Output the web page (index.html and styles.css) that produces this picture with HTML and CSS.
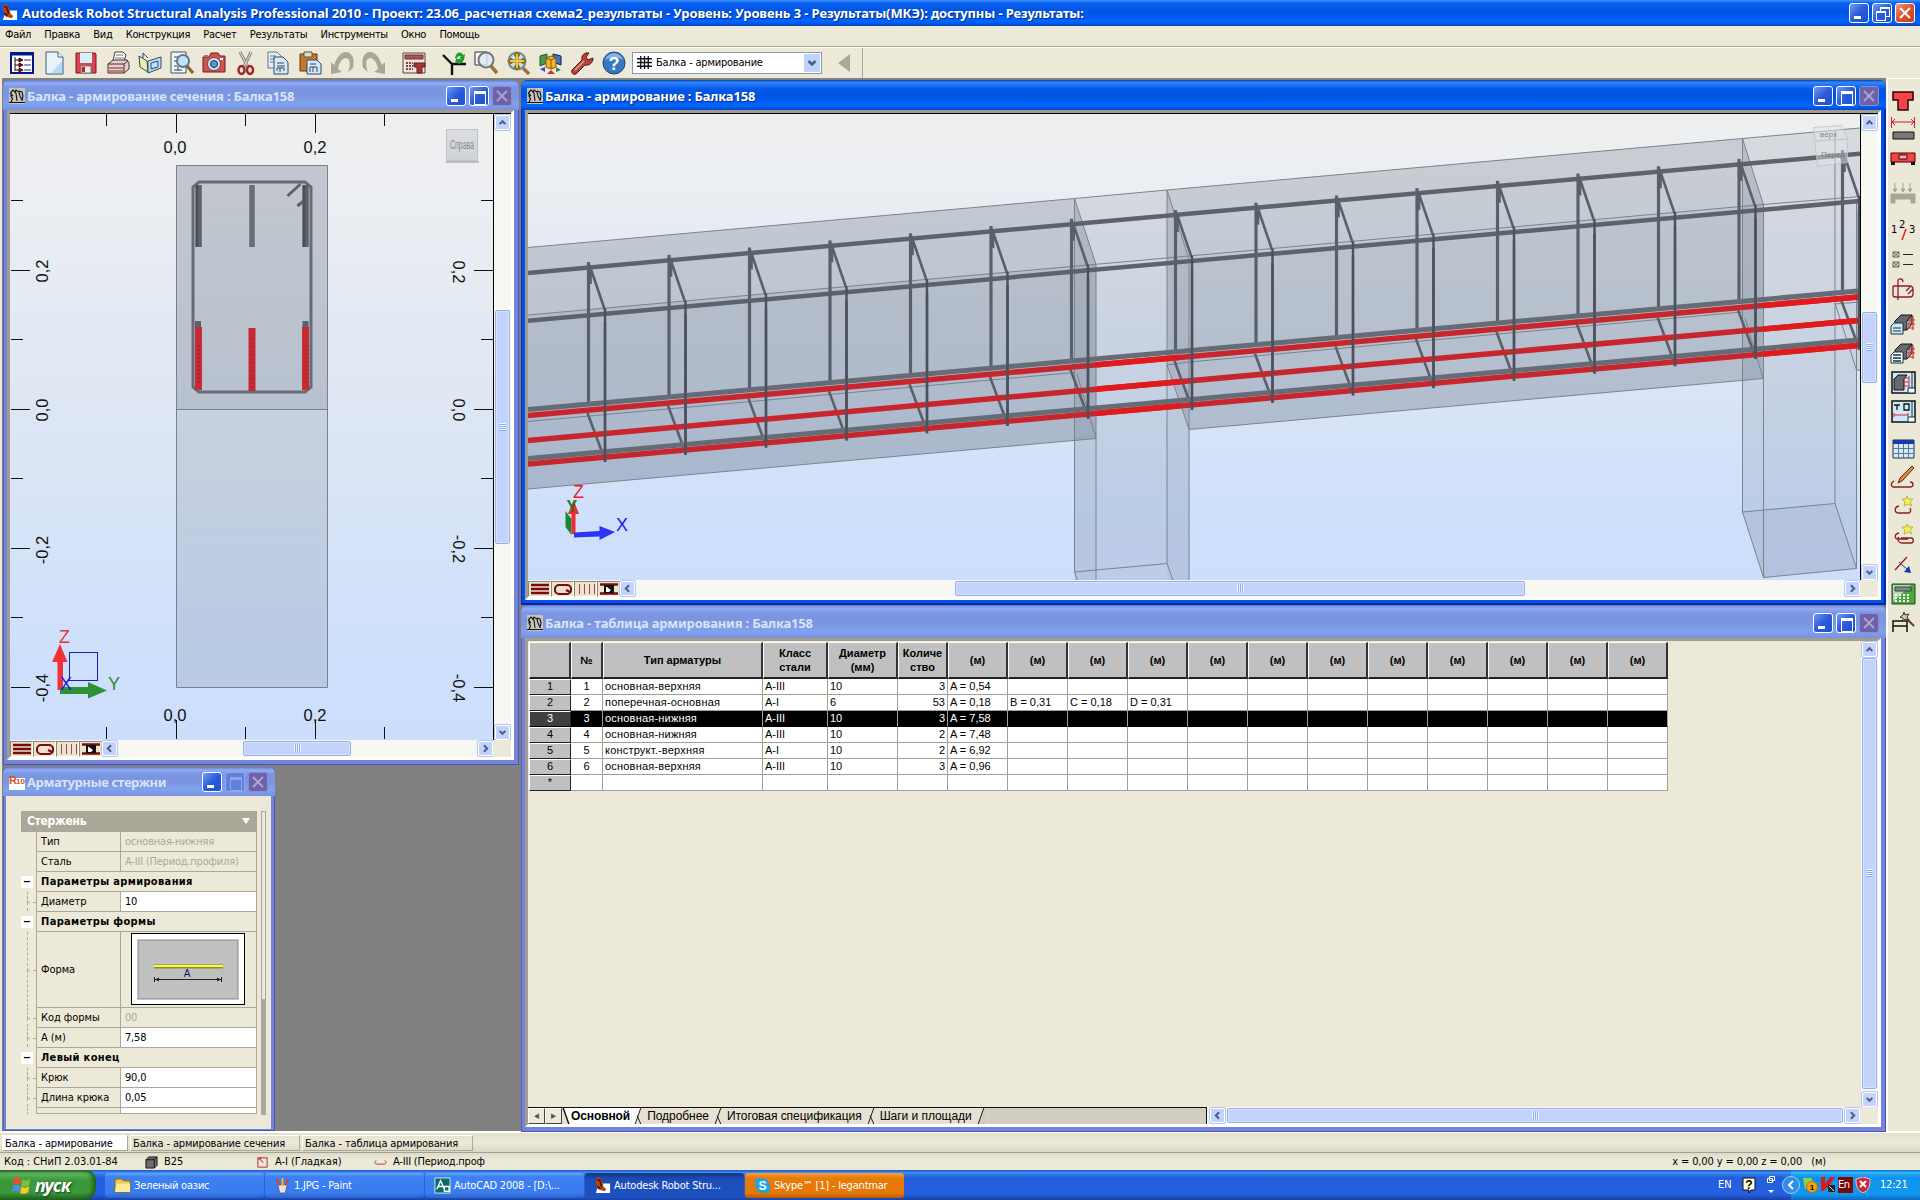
FILE: index.html
```
<!DOCTYPE html>
<html lang="ru">
<head>
<meta charset="utf-8">
<title>Autodesk Robot Structural Analysis Professional 2010</title>
<link rel="stylesheet" href="styles.css">
</head>

<body>
<!-- shared symbols -->
<svg class="defs">
	<defs>
		<linearGradient id="sky" x1="0" y1="0" x2="0" y2="1">
			<stop offset="0" stop-color="#efefef"/>
			<stop offset=".15" stop-color="#ebeef2"/>
			<stop offset=".5" stop-color="#dde6f4"/>
			<stop offset=".85" stop-color="#cfe0fb"/>
			<stop offset="1" stop-color="#cddefd"/>
		</linearGradient>
		<linearGradient id="cube" x1="0" y1="0" x2="0" y2="1"><stop offset="0" stop-color="#dcdee2"/><stop offset="1" stop-color="#cfd2d8"/></linearGradient>
		<symbol id="up" viewBox="0 0 16 16"><path d="M4.500 10L8 6.500l3.500 3.500" fill="none" stroke="#4d6185" stroke-width="2.600"/></symbol>
		<symbol id="down" viewBox="0 0 16 16"><path d="M4.500 6L8 9.500 11.500 6" fill="none" stroke="#4d6185" stroke-width="2.600"/></symbol>
		<symbol id="left" viewBox="0 0 16 16"><path d="M10 4L6 8l4 4" fill="none" stroke="#4d6185" stroke-width="2.600"/></symbol>
		<symbol id="right" viewBox="0 0 16 16"><path d="M6 4l4 4-4 4" fill="none" stroke="#4d6185" stroke-width="2.600"/></symbol>
		<symbol id="wico" viewBox="0 0 16 16"><path d="M0 0h16v16H0z" fill="#c6c4bc"/><path d="M0 14.500h16M2 14l1.500-3L2 8V4l2-2 3 3 1 8M6 5l1-3 3 2 1 4 2 4M10 3l3 1 1 4-1 5M1 5l3 3" fill="none" stroke="#111" stroke-width="1.100"/></symbol>
		<symbol id="robot" viewBox="0 0 18 18"><path d="M5 7h12v10H2z" fill="#fff"/><path d="M2 1l4-1 3 5 1 5 3 3-2 2-7-2-2-6z" fill="#b4440f"/><path d="M3 3l3 0 2 7M3 10l4 2" stroke="#3c1404" stroke-width="1.500" fill="none"/></symbol>
		<symbol id="b1" viewBox="0 0 20 14"><path d="M1 3h18M1 7h18M1 11h18" stroke="#7c0a0a" stroke-width="2.400"/></symbol>
		<symbol id="b2" viewBox="0 0 20 14"><rect x="2" y="3" width="16" height="9" rx="4" fill="none" stroke="#7c0a0a" stroke-width="2"/><path d="M13 8l4 2" stroke="#7c0a0a" stroke-width="2"/></symbol>
		<symbol id="b3" viewBox="0 0 20 14"><path d="M3.500 2v10M8.500 2v10M13.500 2v10M18.500 2v10" stroke="#a34848"/></symbol>
		<symbol id="b4" viewBox="0 0 20 14"><path d="M1 2.500h18M1 11.500h18" stroke="#7c0a0a" stroke-width="2.400"/><path d="M5 3h10v8H5z" fill="#111"/><path d="M7 10V5h1l4 3-2 2z" fill="#fff"/></symbol>
		<!-- one stirrup of the cage, origin at its upper rear corner -->
		<g id="st" fill="none" stroke="#5a5f6a" stroke-width="2.600">
			<path d="M0 0v141" stroke-width="3.200"/>
			<path d="M1 3l15 44M-1 151l16 43M2 8v14"/>
			<path d="M16.500 46v154" stroke="#4b505b" stroke-width="2.400"/>
		</g>
	</defs>
</svg>

<div id="app">
	<div id="title">
		<svg width="17" height="17"><use href="#robot"/></svg>
		<b>Autodesk Robot Structural Analysis Professional 2010 - Проект: 23.06_расчетная схема2_результаты - Уровень: Уровень 3 - Результаты(МКЭ): доступны - Результаты:</b>
		<span class="btns"><i class="min"></i><i class="res"></i><i class="cls"></i></span>
	</div>
	<div id="menu">
		<span>Файл</span><span>Правка</span><span>Вид</span><span>Конструкция</span><span>Расчет</span><span>Результаты</span><span>Инструменты</span><span>Окно</span><span>Помощь</span>
	</div>

	<div id="tools">
		<svg viewBox="0 0 24 24"><path d="M1 2h22v20H1z" fill="#fff" stroke="#001a80" stroke-width="2"/><path d="M1 3h22" stroke="#001a80" stroke-width="3"/><path d="M5 6v14M5 9h5M5 14h5M5 19h5" stroke="#111"/><path d="M9 7l4 2-4 2zM9 12l4 2-4 2zM9 17l4 2-4 2z" fill="#a00" stroke="#400"/><path d="M14 9h7M14 14h7M14 19h7" stroke="#223a90"/></svg>
		<svg viewBox="0 0 24 24"><path d="M4 1h12l5 5v17H4z" fill="#e8f4fc" stroke="#3f5c78"/><path d="M16 1v5h5" fill="#fff" stroke="#3f5c78"/><path d="M9 22l11-12v12z" fill="#b4dbf3"/></svg>
		<svg viewBox="0 0 24 24"><path d="M2 2h19l1 1v19H2z" fill="#d84450" stroke="#7c1822"/><path d="M6 2h12v10H6z" fill="#d6eef5"/><path d="M7 15h10v7H7z" fill="#eee" stroke="#777"/><path d="M8 16h3v5H8z" fill="#b22"/></svg>
		<svg viewBox="0 0 24 24"><path d="M7 10l2-9h8l3 3-2 6z" fill="#fff" stroke="#444"/><path d="M10 4h7M9 7h9" stroke="#777"/><path d="M2 13l5-4h14l2 3v6l-5 4H2z" fill="#e2d2cf" stroke="#4e2a2a"/><path d="M2 13h16l4-3M18 13v9" stroke="#4e2a2a" fill="none"/><path d="M3 17h15M3 20h15" stroke="#b06060" stroke-width="1.500"/></svg>
		<svg viewBox="0 0 24 24"><path d="M1 5l8 5 1 11-8-5z" fill="#e8efb0" stroke="#2e4a48"/><path d="M10 10l13-4v11l-13 5z" fill="#bfe0f4" stroke="#2e4a68"/><path d="M13 12l7-2v6l-7 2zM5 7V2l5 5" fill="none" stroke="#284a6a"/></svg>
		<svg viewBox="0 0 24 24"><path d="M1 1h15v21H1z" fill="#eef6fb" stroke="#456"/><path d="M4 6h5M4 10h4M4 15h3M8 15v5M4 19h8" stroke="#345"/><circle cx="13" cy="10" r="6" fill="#bfe4f5" stroke="#678" stroke-width="2"/><path d="M17 15l6 7" stroke="#8a6230" stroke-width="3"/></svg>
		<svg viewBox="0 0 24 24"><path d="M1 6h6l2-4h7l2 3h5v16H1z" fill="#d94c50" stroke="#6d2024"/><path d="M1 6h5V4H2z" fill="#888"/><circle cx="12" cy="13" r="6.500" fill="#dcdde0" stroke="#555"/><circle cx="12" cy="13" r="3.500" fill="#4b9bd8" stroke="#235"/><path d="M18 8h3" stroke="#fff" stroke-width="2"/></svg>
		<svg viewBox="0 0 24 24"><path d="M6 1l8 15M17 1l-7 15" stroke="#888" stroke-width="3"/><path d="M6 1l8 15M17 1l-7 15" stroke="#ddd" stroke-width="1"/><ellipse cx="7.500" cy="19" rx="3" ry="4" fill="none" stroke="#a02828" stroke-width="2.500"/><ellipse cx="16" cy="19" rx="3" ry="4" fill="none" stroke="#a02828" stroke-width="2.500"/></svg>
		<svg viewBox="0 0 24 24"><path d="M2 1h9l4 4v12H2z" fill="#e3eef6" stroke="#678"/><path d="M4 5h6M4 8h6M4 11h4" stroke="#678"/><path d="M8 6h9l5 5v12H8z" fill="#d5eaf8" stroke="#2e4a68"/><path d="M11 12h7M11 15h8M11 20v-3h7v3M14 17v4" fill="none" stroke="#345"/></svg>
		<svg viewBox="0 0 24 24"><path d="M2 3h17v17H2z" fill="#c47a2c" stroke="#5d3610"/><path d="M6 1h8v5H6z" fill="#e5dfae" stroke="#555"/><path d="M9 9h10l4 4v10H9z" fill="#d5eaf8" stroke="#2e4a68"/><path d="M12 13h6M12 21v-5h7v5M15 16v5" fill="none" stroke="#345"/></svg>
		<svg viewBox="0 0 24 24"><path d="M1 23V11l3 3C7 6 11 1 16 1c6 0 9 7 7 16l-5 4c3-8 2-14-2-14-4 0-7 5-8 11l4 3z" fill="#a9a79a"/></svg>
		<svg viewBox="0 0 24 24"><path d="M23 23V11l-3 3C17 6 13 1 8 1 2 1-1 8 1 17l5 4C3 13 4 7 8 7c4 0 7 5 8 11l-4 3z" fill="#a9a79a"/></svg>
		<svg class="gap" viewBox="0 0 24 24"><path d="M1 2h22v20H1z" fill="#ece4e0" stroke="#5c4444"/><path d="M3 4h18v4H3z" fill="#ba4e4e" stroke="#633"/><path d="M4 12h7M4 15h7M4 18h7" stroke="#844" stroke-dasharray="2 1" stroke-width="2"/><path d="M12 12h11v4h-3v6h-5v-6h-3z" fill="#a33" stroke="#522"/></svg>
		<svg class="gap" viewBox="0 0 24 24"><path d="M1 4l9 9h14M10 13v11" stroke="#111" stroke-width="2.400" fill="none"/><path d="M13 7c1-6 6-7 8-3l2-1-1 6-5-2 2-1c-1-2-4-1-4 2zM22 8c-1 5-6 6-8 3l-1 1 1-4z" fill="#1f9e2a"/></svg>
		<svg viewBox="0 0 24 24"><path d="M1 1h12v13H1z" fill="#f5f5ff" stroke="#333"/><circle cx="12" cy="9" r="7.500" fill="#d8ecf5" fill-opacity=".8" stroke="#777" stroke-width="2"/><path d="M17 15l6 7" stroke="#9c7138" stroke-width="3.500"/></svg>
		<svg viewBox="0 0 24 24"><circle cx="11" cy="10" r="8.500" fill="#c6e1f0" stroke="#788" stroke-width="2"/><path d="M11 3v14M4 10h14M8.500 5L11 3l2.500 2M8.500 15l2.500 2 2.500-2M6 7.500L4 10l2 2.500M16 7.500l2 2.500-2 2.500" stroke="#8a6410" stroke-width="3" fill="none"/><path d="M11 3v14M4 10h14" stroke="#f4c838" stroke-width="2"/><path d="M17 17l6 6" stroke="#9c7138" stroke-width="3.500"/></svg>
		<svg viewBox="0 0 24 24"><path d="M2 5l7-2v9l-7 3z" fill="#4a9a4c" stroke="#254"/><path d="M15 3l8 2v9l-8-3z" fill="#3c74c8" stroke="#124"/><path d="M8 7l5-2 5 2v9l-5 2-5-2z" fill="#f2b530" stroke="#850"/><path d="M8 7l5 2 5-2M13 9v9" stroke="#850" fill="none"/><path d="M2 18l5-2v5z" fill="#2d55c0"/><path d="M9 23l4-4 4 4z" fill="#c33"/><path d="M23 19l-5-3v5z" fill="#2d8a3a"/></svg>
		<svg viewBox="0 0 24 24"><path d="M2 19L12 9c-1-4 2-8 7-7l-3 4 2 3 5-2c0 5-4 8-8 7L6 23c-3 1-5-1-4-4z" fill="#b3433d" stroke="#521815"/><path d="M5 19l9-9" stroke="#e8a09a" stroke-width="1.500"/></svg>
		<svg viewBox="0 0 24 24"><circle cx="12" cy="12" r="11" fill="#3578c4" stroke="#1d4373"/><path d="M3 9c2-9 16-9 18 0-5-3-12-3-18 0z" fill="#84b4e4"/><text x="12" y="19" text-anchor="middle" class="q">?</text></svg>
		<div id="combo"><svg viewBox="0 0 16 16"><path d="M0 4h16M0 8h16M0 12h16M4 1v14M8 1v14M12 1v14" stroke="#111" stroke-width="1.400"/></svg><span>Балка - армирование</span><i><svg viewBox="0 0 16 16"><use href="#down"/></svg></i></div>
		<div id="tri"></div>
		<div id="tbend"></div>
	</div>

	<div id="main">
	<div id="mdi">

		<div class="win" id="w1">
			<div class="cap"><svg width="16" height="16"><use href="#wico"/></svg><b>Балка - армирование сечения : Балка158</b><span class="btns"><i class="min"></i><i class="max"></i><i class="cls off"></i></span></div>
			<div class="frame view">
				<svg class="scene" viewBox="10 114 483 626">
					<rect x="10" y="114" width="483" height="626" fill="url(#sky)"/>
					<rect x="176.500" y="165.500" width="151" height="244" fill="#505c70" fill-opacity=".27"/>
					<rect x="176.500" y="409.500" width="151" height="278" fill="#505c70" fill-opacity=".16"/>
					<path d="M176.500 165.500h151v522h-151zM176.500 409.500h151" fill="none" stroke="#79828b"/>
					<g stroke="#111">
						<path d="M106.500 114v12M176.500 114v19M245.500 114v12M315.500 114v19M384.500 114v12M106.500 727v12M176.500 720v19M245.500 727v12M315.500 720v19M384.500 727v12"/>
						<path d="M11 200.500h12M11 270.500h19M11 339.500h12M11 409.500h19M11 478.500h12M11 548.500h19M11 617.500h12M11 687.500h19"/>
						<path d="M481 200.500h12M474 270.500h19M481 339.500h12M474 409.500h19M481 478.500h12M474 548.500h19M481 617.500h12M474 687.500h19"/>
					</g>
					<g class="num">
						<text x="175" y="153">0,0</text><text x="315" y="153">0,2</text>
						<text x="175" y="721">0,0</text><text x="315" y="721">0,2</text>
						<text transform="translate(48 271) rotate(-90)">0,2</text>
						<text transform="translate(48 410) rotate(-90)">0,0</text>
						<text transform="translate(48 550) rotate(-90)">-0,2</text>
						<text transform="translate(48 688) rotate(-90)">-0,4</text>
						<text transform="translate(453 272) rotate(90)">0,2</text>
						<text transform="translate(453 410) rotate(90)">0,0</text>
						<text transform="translate(453 549) rotate(90)">-0,2</text>
						<text transform="translate(453 688) rotate(90)">-0,4</text>
					</g>
					<path d="M199 182h106l6 5v200l-6 5H199l-6-5V187z" fill="none" stroke="#666b76" stroke-width="3"/>
					<path d="M198.500 185v62M305.500 185v62" stroke="#5c616b" stroke-width="6.500"/>
					<path d="M252 185v62" stroke="#676c76" stroke-width="5.500"/>
					<path d="M197 185v62M304 185v62" stroke="#484d58" stroke-width="2"/>
					<path d="M287.500 196l13-12M297.500 206l6-5" stroke="#5c616b" stroke-width="3"/>
					<path d="M198 321v7M305.500 321v7" stroke="#5c616b" stroke-width="6"/>
					<path d="M198.500 327v63M305.500 327v63M252 328v63" stroke="#c62b33" stroke-width="7"/>
					<path d="M252 338v50M199 345v40M306 345v40" stroke="#9e2028" stroke-dasharray="2 2"/>
					<path d="M446 162h33" stroke="#bbb" stroke-width="2"/>
					<rect x="446.500" y="129.500" width="31" height="31" fill="url(#cube)" stroke="#c0c3c9"/>
					<text x="450" y="149" class="cube" textLength="24" lengthAdjust="spacingAndGlyphs">Справа</text>
					<rect x="69.500" y="652.500" width="28" height="28" fill="none" stroke="#1c1cb8"/>
					<path d="M57.500 690v-28H52l8-18 7.500 18H63v28z" fill="#ee3338"/>
					<path d="M60 687h28v-5l19 8.500-19 8V694H60z" fill="#2f9136"/>
					<text x="59" y="643" class="ax" fill="#e8343a">Z</text><text x="108" y="690" class="ax" fill="#2a8a32">Y</text><text x="60" y="690" class="ax" fill="#1a1ae0">X</text>
				</svg>
				<div class="vbar"><i class="ar"><svg><use href="#up"/></svg></i><i class="thumb" style="height:234px;margin-top:180px"><u></u></i><i class="ar end"><svg><use href="#down"/></svg></i></div>
				<div class="hbar"><i class="tb"><svg><use href="#b1"/></svg></i><i class="tb"><svg><use href="#b2"/></svg></i><i class="tb"><svg><use href="#b3"/></svg></i><i class="tb"><svg><use href="#b4"/></svg></i><i class="ar"><svg><use href="#left"/></svg></i><i class="thumb" style="width:108px;margin-left:125px"><u></u></i><i class="ar end"><svg><use href="#right"/></svg></i></div>
				<div class="corner"></div>
			</div>
		</div>

		<div class="win act" id="w2">
			<div class="cap"><svg width="16" height="16"><use href="#wico"/></svg><b>Балка - армирование : Балка158</b><span class="btns"><i class="min"></i><i class="max"></i><i class="cls off"></i></span></div>
			<div class="frame view">
				<svg class="scene" viewBox="528 114 1332 466">
					<rect x="528" y="114" width="1332" height="466" fill="url(#sky)"/>
					<!-- columns -->
					<path d="M1074.500 198.500L1167 190l22 69v321H1074.500z" fill="#505c70" fill-opacity=".14"/>
					<path d="M1074.500 436h21.500v144h-21.500zM1167 365l22 64v151h-22z" fill="#505c70" fill-opacity=".05"/>
					<path d="M1742.500 138.500l117.500-10.500V371h-3.500V568.500l-93 9-21-66z" fill="#505c70" fill-opacity=".14"/>
					<path d="M1742.500 511.500l92.500-8 21.500 65-93 9z" fill="#505c70" fill-opacity=".07"/>
					<!-- beam spans -->
					<path d="M528 247.500l546.500-49 21.500 66v174l-568 50.500z" fill="#4a5868" fill-opacity=".24"/>
					<path d="M528 315l568-51v174l-568 50.500z" fill="#4a5868" fill-opacity=".07"/>
					<path d="M1167 190l575.500-51.500 21 66.500v173.500l-574.500 51-22-65z" fill="#4a5868" fill-opacity=".22"/>
					<path d="M1189 259l574.500-54v173.500l-574.500 51z" fill="#4a5868" fill-opacity=".06"/>
					<g fill="none" stroke="#7b838b">
						<path d="M528 247.500l546.500-49L1167 190l575.500-51.500L1860 128M528 315l661-59 574-51.500 97-8"/>
						<path d="M528 421.500l546.500-49M1189 362l553-50M528 489l568-50.500M1189 429.500l574.500-51"/>
						<path d="M1074.500 198.500l21.500 66v316M1074.500 198.500v373.500l92.500-8.500M1167 190l22 69v321M1167 190v373.500l6 17M1074.500 572l3 8M1077 374l19 64M1167 365l22 64M1167 365l22-3"/>
						<path d="M1742.500 138.500l21 66.500v372.500l93-9M1742.500 138.500v373.500l92.500-8.500M1835 131v372.500l21.500 65V200M1742.500 512l21 65.500M1745 318l18 60M1835 303l21.500 67h4M1835 304l25-2"/>
					</g>
					<!-- longitudinal bars -->
					<path d="M528 273L1860 153.700M528 320.700L1860 201" stroke="#5d626c" stroke-width="4.500"/>
					<g id="cage"></g>
					<path d="M528 409.500L1858 291M528 458.500L1858 340" stroke="#666c76" stroke-width="5"/>
					<path d="M528 415.500L1858 297M528 440.500L1858 320.500M528 464L1858 345.500" stroke="#c8262d" stroke-width="5.500"/>
					<path d="M1097 364.700L1180 357.300M1097 389L1180 381.700M1097 413.200L1180 405.800M1764 305.400L1858 297M1764 329L1858 320.500M1764 353.900L1858 345.500" stroke="#e2191d" stroke-width="5.500"/>
					<g id="front" stroke="#4b505b" stroke-width="2.400"></g>
					<g opacity=".8"><path d="M1813.500 127.500l28-2 6 13v24l-30 4z" fill="#e3e4e6" fill-opacity=".6" stroke="#c0c3c8"/><path d="M1814 141l33-2" stroke="#bbb"/><text x="1820" y="137" class="cube s">верх</text><text x="1821" y="157" class="cube s">Перед</text></g>
					<path d="M565.500 511l6 8v16l-6-8z" fill="#1e8433"/>
					<path d="M571.500 534v-20H568l5.500-14 5.500 14h-3.500v20z" fill="#f02b32"/>
					<path d="M574 532.500l25.500-1.500v-5l15.500 6-15.500 8v-3.500l-25.500 1z" fill="#2b33f5"/>
					<text x="573" y="498" class="ax" fill="#f01c24">Z</text><text x="566.500" y="512" class="ax y" fill="#237a24">Y</text><text x="616" y="531" class="ax" fill="#1a1ae8">X</text>
				</svg>
				<div class="vbar"><i class="ar"><svg><use href="#up"/></svg></i><i class="thumb" style="height:71px;margin-top:182px"><u></u></i><i class="ar end"><svg><use href="#down"/></svg></i></div>
				<div class="hbar"><i class="tb"><svg><use href="#b1"/></svg></i><i class="tb"><svg><use href="#b2"/></svg></i><i class="tb"><svg><use href="#b3"/></svg></i><i class="tb"><svg><use href="#b4"/></svg></i><i class="ar"><svg><use href="#left"/></svg></i><i class="thumb" style="width:570px;margin-left:319px"><u></u></i><i class="ar end"><svg><use href="#right"/></svg></i></div>
				<div class="corner"></div>
			</div>
		</div>

		<div class="win" id="w3">
			<div class="cap"><svg width="16" height="16"><use href="#wico"/></svg><b>Балка - таблица армирования : Балка158</b><span class="btns"><i class="min"></i><i class="max"></i><i class="cls off"></i></span></div>
			<div class="frame view">
				<div class="sheet"><table id="tab"></table></div>
				<div class="vbar"><i class="ar"><svg><use href="#up"/></svg></i><i class="thumb" style="height:431px;margin-top:1px"><u></u></i><i class="ar end"><svg><use href="#down"/></svg></i></div>
				<div class="hbar">
					<div class="pages">
						<i class="pg">◂</i><i class="pg">▸</i>
						<div class="tabs">
							<svg class="edge" viewBox="0 0 8 17"><path d="M0 0h8v17z" fill="#fff"/><path d="M1 0l6 17" stroke="#111" stroke-width="1.500"/></svg><b>Основной</b>
							<svg class="edge w" viewBox="0 0 14 17"><path d="M0 0h10L5 17H0z" fill="#fff"/><path d="M10 0L4 17M6 8l4 9" stroke="#111" fill="none"/></svg><span>Подробнее</span>
							<svg class="edge w" viewBox="0 0 14 17"><path d="M10 0L4 17M6 8l4 9" stroke="#111" fill="none"/></svg><span>Итоговая спецификация</span>
							<svg class="edge w" viewBox="0 0 14 17"><path d="M10 0L4 17M6 8l4 9" stroke="#111" fill="none"/></svg><span>Шаги и площади</span>
							<svg class="edge w" viewBox="0 0 14 17"><path d="M10 0h4v17H4z" fill="#d1cdc3"/><path d="M10 0L4 17" stroke="#111" fill="none"/></svg>
						</div>
					</div>
					<i class="ar"><svg><use href="#left"/></svg></i><i class="thumb" style="width:616px;margin-left:1px"><u></u></i><i class="ar end"><svg><use href="#right"/></svg></i>
				</div>
				<div class="corner"></div>
			</div>
		</div>

		<div class="win" id="w4">
			<div class="cap"><svg width="16" height="16" viewBox="0 0 16 16"><path d="M0 4h16v12H0z" fill="#fff"/><text x="0" y="10" class="r10">R</text><text x="7" y="10" class="r10 n">10</text></svg><b>Арматурные стержни</b><span class="btns"><i class="min"></i><i class="max off"></i><i class="cls off"></i></span></div>
			<div class="pbody">
				<div id="props">
					<div class="phead">Стержень<i></i></div>
					<div class="prow"><label>Тип</label><span class="dis">основная-нижняя</span></div>
					<div class="prow"><label>Сталь</label><span class="dis">A-III (Период.профиля)</span></div>
					<div class="prow grp"><b>Параметры армирования</b></div>
					<div class="prow t"><label>Диаметр</label><span>10</span></div>
					<div class="prow grp"><b>Параметры формы</b></div>
					<div class="prow t tall"><label>Форма</label><span class="dis">
						<svg width="114" height="72" viewBox="0 0 114 72"><rect x=".5" y=".5" width="113" height="71" fill="#fff" stroke="#000"/><rect x="7" y="7" width="100" height="59" fill="#c0c0c0" stroke="#888"/><path d="M23 33.500h69" stroke="#8c8c20" stroke-width="4"/><path d="M23 33h69" stroke="#f8f840" stroke-width="2"/><path d="M23.500 46.500h67M23.500 44v5M90.500 44v5" stroke="#222"/><path d="M24 46.500l4-2v4zM90 46.500l-4-2v4z" fill="#222"/><text x="56" y="44" class="dim">A</text></svg></span></div>
					<div class="prow t"><label>Код формы</label><span class="dis">00</span></div>
					<div class="prow t"><label>А (м)</label><span>7,58</span></div>
					<div class="prow grp"><b>Левый конец</b></div>
					<div class="prow t"><label>Крюк</label><span>90,0</span></div>
					<div class="prow t"><label>Длина крюка</label><span>0,05</span></div>
					<div class="prow t last"><label></label><span></span></div>
				</div>
				<div id="pscroll"><i></i></div>
			</div>
		</div>
	</div>

	<div id="side">
		<svg viewBox="0 0 26 26"><path d="M3 5h20v8h-5v10H8V13H3z" fill="#f4444c" stroke="#300" stroke-width="1.500"/></svg>
		<svg viewBox="0 0 26 26"><path d="M1.500 1v11M24.500 1v11M1 6h24M5 3L2 6l3 3M21 3l3 3-3 3" stroke="#d81c24" fill="none"/><path d="M3 16h21v7H3z" fill="#777b7a" stroke="#111"/></svg>
		<svg viewBox="0 0 26 26"><path d="M1 8h24v9H1z" fill="#f4444c" stroke="#400"/><path d="M1 17h4v3H1zM21 17h4v3h-4z" fill="#111"/><path d="M9 10h8v4H9z" fill="#f9b5b5" stroke="#400"/></svg>
		<svg class="gap" viewBox="0 0 26 26"><path d="M1 13h24v9h-4v-4H5v4H1zM5 2v8M13 2v8M20 2v8M3 8l2 3 2-3zM11 8l2 3 2-3zM18 8l2 3 2-3z" fill="#a9a699" stroke="#a9a699"/></svg>
		<svg class="gap" viewBox="0 0 26 26"><text x="1" y="15" class="tx">1</text><text x="9" y="10" class="tx">2</text><text x="19" y="15" class="tx">3</text><path d="M12 22l4-11" stroke="#d22" stroke-width="1.500"/></svg>
		<svg viewBox="0 0 26 26"><path d="M3 5h6v5H3zM3 15h6v5H3zM3 5l6 5M9 5l-6 5M3 15l6 5M9 15l-6 5" stroke="#444" fill="none" stroke-width=".8"/><path d="M13 7.500h10M13 17.500h10" stroke="#222"/></svg>
		<svg viewBox="0 0 26 26"><path d="M8 24V5c0-3 5-3 5 1M3 10h17c3 0 3 2 3 4v4c0 2-1 3-3 3H6c-3 0-3-1-3-3v-8M16 15l4-4M18 18l5-5" stroke="#8e1c24" fill="none" stroke-width="1.300"/></svg>
		<svg class="gap" viewBox="0 0 26 26"><path d="M5 9l6-6h11l-5 6v9H5z" fill="#666a6c" stroke="#111"/><path d="M17 9l5-6v9l-5 6" fill="#999" stroke="#111"/><path d="M18 8h7M18 12h7M18 16h6M23 4v14" stroke="#d22"/><path d="M1 14l3-3h9v11H1z" fill="#cfe8fa" stroke="#134"/><path d="M3 16h8M3 19h8" stroke="#134"/></svg>
		<svg viewBox="0 0 26 26"><path d="M5 9l6-6h11l-5 6v9H5z" fill="#666a6c" stroke="#111"/><path d="M17 9l5-6v9l-5 6" fill="#999" stroke="#111"/><path d="M18 8h7M18 12h7M18 16h6M23 4v14" stroke="#d22"/><path d="M1 14l3-3h9v11H1z" fill="#fff" stroke="#134"/><path d="M3 14h8M3 17h8M3 20h8" stroke="#134" stroke-width="1.500"/></svg>
		<svg viewBox="0 0 26 26"><path d="M2 2h23v21H2z" fill="#cfe8fa" stroke="#111" stroke-width="1.500"/><path d="M4 9l4-4h9l-3 4v11H4z" fill="#666a6c" stroke="#111"/><path d="M14 8h5M14 12h5M14 16h5M19 6v12" stroke="#d22"/><path d="M18 18h7v5h-7zM22 2v16" stroke="#134" fill="#fff"/></svg>
		<svg viewBox="0 0 26 26"><path d="M2 2h23v21H2z" fill="#cfe8fa" stroke="#111" stroke-width="1.500"/><path d="M4 6h6M7 6v5M14 5h5v6h-5z" stroke="#111" stroke-width="1.300" fill="none"/><path d="M4 16h14M4 14v4M18 14v4" stroke="#d22"/><path d="M18 18h7v5h-7zM22 2v16" stroke="#134" fill="#fff"/></svg>
		<svg class="gap" viewBox="0 0 26 26"><path d="M3 4h21v18H3z" fill="#d8e8f8" stroke="#234"/><path d="M3 4h21v4H3z" fill="#1638a8"/><path d="M3 12.500h21M3 17.500h21M8.500 8v14M13.500 8v14M18.500 8v14" stroke="#56789a"/></svg>
		<svg viewBox="0 0 26 26"><path d="M4 16c-4 2-3 6 0 6h16c4 0 4-5 0-5" fill="none" stroke="#8e1c24" stroke-width="1.300"/><path d="M8 18l2-5L22 1l2 2-12 13z" fill="#e08a3c" stroke="#5a2c0c"/></svg>
		<svg viewBox="0 0 26 26"><path d="M9 12c-5 1-5 7 0 7h9c3 0 3-3 2-5" fill="none" stroke="#8e1c24" stroke-width="1.300"/><path d="M17 2l2 3 4 0-3 3 2 4-4-2-4 2 1-4-3-3 4 0z" fill="#f5f05a" stroke="#a8a020" stroke-width=".7"/></svg>
		<svg viewBox="0 0 26 26"><path d="M9 10c-5 1-5 6 0 6h9M9 14c-3 2 0 6 3 6h9c3 0 3-5 0-5H11" fill="none" stroke="#8e1c24" stroke-width="1.300"/><path d="M17 1l2 3 4 0-3 3 2 4-4-2-4 2 1-4-3-3 4 0z" fill="#f5f05a" stroke="#a8a020" stroke-width=".7"/></svg>
		<svg viewBox="0 0 26 26"><path d="M5 18L17 5" stroke="#8e1c24" stroke-width="1.300"/><path d="M9 10l9 8" stroke="#1638a8"/><path d="M21 21l-7-1 5-6z" fill="#1638a8"/></svg>
		<svg viewBox="0 0 26 26"><path d="M2 3h23v20H2z" fill="#4ba63c" stroke="#234d1c"/><path d="M3 4h18L3 21z" fill="#b9d8b0"/><path d="M5 6h16v4H5z" fill="#7d8f7a" stroke="#345"/><path d="M5 14h16M5 17h16M5 20h16" stroke="#fff" stroke-width="2" stroke-dasharray="2 2"/></svg>
		<svg viewBox="0 0 26 26"><path d="M3 22V11h14v11M3 16h14" fill="none" stroke="#111" stroke-width="1.500"/><path d="M16 8l8 8" stroke="#6b3a20" stroke-width="2"/><path d="M14 2l1 3 4-1-2 3 2 3-4-1-2 3v-4l-3-1 3-2z" fill="#d8cfa8" stroke="#433"/></svg>
	</div>
	</div>

	<div id="wtabs"><span class="on">Балка - армирование</span><span class="p2">Балка - армирование сечения</span><span class="p3">Балка - таблица армирования</span></div>
	<div id="status">
		<span class="s1">Код : СНиП 2.03.01-84</span>
		<span class="s2"><svg viewBox="0 0 14 14"><path d="M1 4l3-3h9v9l-3 3H1z" fill="#6d6d6d" stroke="#111"/><path d="M1 4h9v9M10 4l3-3" fill="none" stroke="#111"/></svg>B25</span>
		<span class="s3"><svg viewBox="0 0 14 14"><path d="M2 2h10v10H2zM2 2l6 5M5 1v3" fill="none" stroke="#b02020"/></svg>A-I (Гладкая)</span>
		<span class="s4"><svg viewBox="0 0 16 14"><path d="M3 5c-3 0-2 4 0 4h10c2 0 3-4 0-4" fill="none" stroke="#b02020"/></svg>A-III (Период.проф</span>
		<span class="xyz">x = 0,00 y = 0,00 z = 0,00 &nbsp; (м)</span>
	</div>

	<div id="task">
		<div id="start"><svg viewBox="0 0 22 22"><path d="M2 4c3-2 5-2 8 0L9 11c-3-2-5-2-8 0z" fill="#e8502a"/><path d="M11 5c3 1 6 1 9-1l-1 7c-3 2-6 2-9 1z" fill="#79c143"/><path d="M1 12c3-2 5-1 8 0l-1 7c-3-2-5-2-8 0z" fill="#4d8ef0"/><path d="M10 13c3 1 6 1 9-1l-1 7c-3 2-6 2-9 1z" fill="#f7c72c"/></svg><b>пуск</b></div>
		<div class="tk"><svg viewBox="0 0 18 18"><path d="M1 4l2-2h5l2 2h7v12H1z" fill="#f0c850" stroke="#8a6a10"/><path d="M3 7h14v9H1z" fill="#fdeb9a"/></svg>Зеленый оазис</div>
		<div class="tk"><svg viewBox="0 0 18 18"><path d="M4 8h10l-2 9H6z" fill="#dfe6ea" stroke="#567"/><path d="M6 9L3 2M9 9V1M12 9l3-7" stroke="#d8402a" stroke-width="2"/><path d="M9 9V1" stroke="#e8c040" stroke-width="2"/></svg>1.JPG - Paint</div>
		<div class="tk"><svg viewBox="0 0 18 18"><path d="M1 1h16v16H1z" fill="#0d6b6b" stroke="#cfeeee"/><path d="M3 13L7 4l4 9M5 10h4M11 10h5v5h-5z" stroke="#fff" fill="none" stroke-width="1.500"/></svg>AutoCAD 2008 - [D:\...</div>
		<div class="tk cur"><svg viewBox="0 0 18 18"><use href="#robot"/></svg>Autodesk Robot Stru...</div>
		<div class="tk sk"><svg viewBox="0 0 18 18"><circle cx="9" cy="9" r="7.500" fill="#18a6e6"/><circle cx="5" cy="5" r="4" fill="#18a6e6"/><circle cx="13" cy="13" r="4" fill="#18a6e6"/><text x="9" y="14" text-anchor="middle" class="sks">S</text></svg>Skype™ [1] - legantmar</div>
		<div id="lang"><span>EN</span><svg width="14" height="16" viewBox="0 0 14 16"><path d="M1 1h12v12H9l-2 3v-3H1z" fill="#ffffe1" stroke="#111"/><text x="7" y="11.500" text-anchor="middle" class="hq">?</text></svg><svg width="10" height="22" viewBox="0 0 10 22"><path d="M3.500 2.500h5v4h-5zM1.500 4.500h5v4h-5z" fill="#2458c8" stroke="#fff"/><path d="M2 16h6l-3 3z" fill="#fff"/></svg></div>
		<div id="tray">
			<svg class="chev" viewBox="0 0 18 18"><circle cx="9" cy="9" r="8.500" fill="#2f8ce8" stroke="#9fd2ff"/><path d="M11 5L7 9l4 4" fill="none" stroke="#fff" stroke-width="2"/></svg>
			<svg viewBox="0 0 16 16"><path d="M1 1h8l3 5-4 6H3z" fill="#8fd044"/><circle cx="10" cy="10" r="5.500" fill="#f5a21a" stroke="#b86c08"/><text x="10" y="13" text-anchor="middle" class="one">1</text></svg>
			<svg viewBox="0 0 16 16"><path d="M1 0h4v7l5-7h5L9 9l-6 5H1z" fill="#e01818"/><path d="M8 8h7v7H8z" fill="#222"/><path d="M9 9l5 5" stroke="#ddd"/></svg>
			<span class="en">En</span>
			<svg viewBox="0 0 16 16"><path d="M8 0l7 2c0 7-1 11-7 14C2 13 1 9 1 2z" fill="#c8283c" stroke="#e8c0c8"/><path d="M5 4l6 6M11 4l-6 6" stroke="#fff" stroke-width="2"/></svg>
			<span class="clock">12:21</span>
		</div>
	</div>
</div>

<script>
	// stirrups: [x, y] of the upper rear corner
	var st=[[588.5,262]]
	for(var i=1;i<7;i++){
		st.push([588.5+80.5*i,262-7.2*i])
	}
	for(var i=0;i<8;i++){
		st.push([1175.5+80.5*i,210-7.3*i])
	}
	st.push([1842.5,150])
	var s1="",s2=""
	for(var i=0;i<st.length;i++){
		s1+='<use href="#st" x="'+st[i][0]+'" y="'+st[i][1]+'"/>'
		s2+='<path d="M'+(st[i][0]+16.5)+' '+(st[i][1]+60)+'v140"/>'
	}
	document.getElementById('cage').innerHTML=s1
	document.getElementById('front').innerHTML=s2

	// reinforcement table
	var head=["","№","Тип арматуры","Класс<br>стали","Диаметр<br>(мм)","Количе<br>ство"]
	var w=[42,32,160,65,70,50]
	var rows=[
		["1","1","основная-верхняя","A-III","10","3","A = 0,54"],
		["2","2","поперечная-основная","A-I","6","53","A = 0,18","B = 0,31","C = 0,18","D = 0,31"],
		["3","3","основная-нижняя","A-III","10","3","A = 7,58"],
		["4","4","основная-нижняя","A-III","10","2","A = 7,48"],
		["5","5","конструкт.-верхняя","A-I","10","2","A = 6,92"],
		["6","6","основная-верхняя","A-III","10","3","A = 0,96"],
		["*"]
	]
	for(var i=0;i<12;i++){
		head.push("(м)")
		w.push(60)
	}
	var h="<colgroup>"
	for(var i=0;i<w.length;i++){
		h+='<col style="width:'+w[i]+'px">'
	}
	h+="</colgroup><tr>"
	for(var i=0;i<head.length;i++){
		h+="<th>"+head[i]+"</th>"
	}
	h+="</tr>"
	for(var r=0;r<rows.length;r++){
		h+=r==2?'<tr class="sel">':"<tr>"
		for(var i=0;i<head.length;i++){
			h+="<td>"+(rows[r][i]||"")+"</td>"
		}
		h+="</tr>"
	}
	document.getElementById('tab').innerHTML=h
</script>
</body>
</html>
```
FILE: styles.css
```
*{
	box-sizing:border-box;
}
body{
	margin:0;
	font:11px/14px "DejaVu Sans Condensed","DejaVu Sans",sans-serif;
	color:#000;
	background:#ece9d8;
}
i{
	font-style:normal;
}
.defs{
	position:absolute;
	width:0;
	height:0;
}
#app{
	width:1920px;
	height:1200px;
	display:flex;
	flex-direction:column;
	overflow:hidden;
}
/* main caption */
#title{
	height:26px;
	display:flex;
	align-items:center;
	padding:0 5px 0 1px;
	background:linear-gradient(#3a93ff 0,#0a5ff0 12%,#0054e3 45%,#0064ff 80%,#0057e8 92%,#0340b5 100%);
	color:#fff;
}
#title b,.cap b{
	font:bold 13px/20px "Noto Sans",sans-serif;
	white-space:nowrap;
	text-shadow:1px 1px 1px #0a2d80;
}
#title b{
	margin-left:4px;
	letter-spacing:-.12px;
}
.btns{
	margin-left:auto;
	display:flex;
	gap:3px;
}
.btns i{
	width:20px;
	height:20px;
	border:1px solid #fff;
	border-radius:3px;
	background:linear-gradient(135deg,#6f9cf5,#2a5bdc 50%,#1e50d0);
	display:block;
	position:relative;
}
.btns i:before,.btns i:after{
	content:"";
	position:absolute;
}
.btns .min:before{
	left:4px;
	top:12px;
	width:7px;
	height:3px;
	background:#fff;
}
.btns .max:before{
	left:4px;
	top:4px;
	width:10px;
	height:10px;
	border:1px solid #fff;
	border-top-width:3px;
}
.btns .res:before{
	left:7px;
	top:3px;
	width:8px;
	height:7px;
	border:1px solid #fff;
	border-top-width:2px;
}
.btns .res:after{
	left:3px;
	top:7px;
	width:8px;
	height:7px;
	border:1px solid #fff;
	border-top-width:2px;
	background:#2a5bdc;
}
.btns .cls{
	background:linear-gradient(135deg,#f09a80,#e0502c 50%,#c83c14);
}
.btns .cls:before,.btns .cls:after{
	left:8px;
	top:2px;
	width:2px;
	height:14px;
	background:#fff;
	transform:rotate(45deg);
}
.btns .cls:after{
	transform:rotate(-45deg);
}
.btns .cls.off{
	background:#6a62ae;
	border-color:#8f8cc6;
}
.btns .cls.off:before,.btns .cls.off:after{
	background:#b0a3c4;
}
.btns .max.off{
	background:#5f80dc;
	border-color:#90a9ec;
}
.btns .max.off:before{
	border-color:#8da6ea;
}

#menu{
	height:20px;
	display:flex;
	gap:13.300px;
	padding:2px 0 0 5px;
	background:#ece9d8;
	letter-spacing:-.33px;
}
#tools{
	height:32px;
	display:flex;
	align-items:center;
	gap:8px;
	padding:1px 0 0 10px;
	border-top:1px solid #aca899;
	box-shadow:inset 0 1px #fff;
	background:#ece9d8;
}
#tools>svg{
	width:24px;
	height:24px;
}
#tools .gap{
	margin-left:8px;
}
.q{
	font:bold 18px "Liberation Sans",sans-serif;
	fill:#fff;
}
#combo{
	width:190px;
	height:22px;
	margin-left:-2px;
	border:1px solid #7f9db9;
	background:#fff;
	display:flex;
	align-items:center;
	padding:1px 1px 1px 4px;
	letter-spacing:-.2px;
}
#combo>svg{
	width:15px;
	height:15px;
	margin-right:4px;
}
#combo i{
	margin-left:auto;
	width:16px;
	height:18px;
	background:#c1d3fb;
	padding-top:1px;
}
#tri{
	margin-left:8px;
	border:9px solid transparent;
	border-left:0;
	border-right:12px solid #aca899;
}
#tbend{
	width:1px;
	height:30px;
	margin-left:4px;
	background:#aca899;
}

#main{
	height:1054px;
	display:flex;
}
#mdi{
	width:1886px;
	background:#808080;
	border-left:2px solid #ece9d8;
	position:relative;
}
#side{
	flex:1;
	border-left:2px solid #fff;
	border-top:1px solid #fff;
	background:#ebe8d7;
	display:flex;
	flex-direction:column;
	align-items:center;
	padding:8px 3px 0 0;
	gap:3px;
}
#side svg{
	width:26px;
	height:26px;
	flex:none;
}
#side .gap{
	margin-top:7.500px;
}
.tx{
	font:10px "DejaVu Sans",sans-serif;
}

/* mdi children, placed on the desktop */
.win{
	position:absolute;
	display:flex;
	flex-direction:column;
	padding:0 5px 5px 4px;
	border-radius:7px 7px 0 0;
	background:#7484dc;
	box-shadow:inset 1px 0 #5560c0,inset -1px -1px #4a52b4;
}
.win.act{
	background:#0650e8;
	box-shadow:inset 1px 0 #0030c0,inset -2px -2px #0028a0;
}
#w1{left:1px;top:2px;width:516px;height:685px}
#w2{left:519px;top:2px;width:1365px;height:525px}
#w3{left:519px;top:527px;width:1365px;height:527px}
#w4{left:1px;top:689px;width:272px;height:364px;padding:0 4px 4px 4px}
.cap{
	height:30px;
	flex:none;
	margin:0 -5px 0 -4px;
	padding:2px 7px 0 6px;
	display:flex;
	align-items:center;
	border-radius:7px 7px 0 0;
	background:linear-gradient(#6478c8 0,#90acf4 10%,#7b96e2 25%,#7a94e0 50%,#80a2ee 80%,#7a90dc 100%);
}
#w3 .cap{
	height:33px;
	padding-top:3px;
}
#w4 .cap{
	height:29px;
	margin:0 -4px;
}
.act .cap{
	background:linear-gradient(#0d45a8 0,#2f86ff 8%,#0458e8 30%,#0054e3 55%,#0066ff 85%,#0048cc 100%);
}
.cap b{
	color:#d8e4f8;
	margin-left:2px;
	text-shadow:none;
	letter-spacing:-.18px;
}
.act .cap b{
	color:#fff;
	text-shadow:1px 1px 1px #0a2d80;
}
#w4 .cap b{
	letter-spacing:-.38px;
}
.r10{
	font:bold 11px "Liberation Sans",sans-serif;
	fill:#e0501c;
}
.r10.n{
	font-size:8px;
}
.frame{
	flex:1;
	min-height:0;
	border:3px solid;
	border-color:#a09d90 #fff #fff #a09d90;
}
.view{
	display:grid;
	grid-template-columns:1fr 18px;
	grid-template-rows:1fr 17px;
}
#w1 .view,#w2 .view{
	box-shadow:inset 0 1px #000;
	padding-top:1px;
}
.scene{
	width:100%;
	height:100%;
	display:block;
}
.num{
	font:16.500px "Liberation Sans",sans-serif;
	text-anchor:middle;
	fill:#111;
}
.ax{
	font:18px "Liberation Sans",sans-serif;
	stroke-width:.3;
}
.ax.y{
	font-size:16px;
	font-weight:bold;
}
.cube{
	font:12px "Liberation Sans",sans-serif;
	fill:#888b92;
}
.cube.s{
	font-size:8px;
	fill:#777;
}
.vbar,.hbar{
	background:#f8f8f3;
	display:flex;
}
.vbar{
	flex-direction:column;
	border-left:1px solid #000;
	padding:0 1px;
}
#w3 .vbar{
	border-left-color:#e8e6da;
}
.hbar{
	padding:1px 0;
}
.corner{
	background:#ece9d8;
}
.ar{
	width:15px;
	height:15px;
	flex:none;
	border:1px solid #fff;
	border-radius:2px;
	background:#c3d3fc;
	box-shadow:0 0 0 1px #b4c6ee;
}
.vbar .ar{
	margin:1px 0 0 0;
}
.hbar .ar{
	margin:0 1px 0 0;
}
.vbar .ar.end{
	margin-top:auto;
}
.hbar .ar.end{
	margin:0 0 0 auto;
}
.ar svg{
	display:block;
	width:13px;
	height:13px;
}
.thumb{
	flex:none;
	border:1px solid #98b0e4;
	border-radius:2px;
	background:#c3d3fc;
	box-shadow:inset 0 0 0 1px #d6e2ff;
	display:flex;
	align-items:center;
	justify-content:center;
}
.thumb u{
	width:7px;
	height:8px;
	background:repeating-linear-gradient(#eef4fe 0 1px,#8cb0f8 1px 2px);
}
.hbar .thumb u{
	background:repeating-linear-gradient(90deg,#eef4fe 0 1px,#8cb0f8 1px 2px);
}
.tb{
	width:23px;
	height:16px;
	flex:none;
	background:#e9e3cf;
	border:1px solid #8a8678;
	border-right-color:#fff;
	border-bottom-color:#fff;
	padding:0 1px;
}
.tb svg{
	display:block;
	width:20px;
	height:14px;
}

/* table window */
.sheet{
	background:#ece9d8;
	overflow:hidden;
	padding:1px 0 0 1px;
}
#tab{
	table-layout:fixed;
	width:1139px;
	border-collapse:separate;
	border-spacing:0;
	font:11px/14px "Liberation Sans",sans-serif;
}
#tab th{
	height:37px;
	padding:0;
	line-height:14px;
	background:#c0c0c0;
	border:1px solid;
	border-width:1px 2px 2px 1px;
	border-color:#fff #333 #222 #fff;
}
#tab td{
	height:16px;
	padding:0 2px;
	line-height:14px;
	background:#fff;
	border-right:1px solid #a0a096;
	border-bottom:1px solid #a0a096;
	white-space:nowrap;
}
#tab td:nth-child(1){
	text-align:center;
	background:#c0c0c0;
	border:1px solid;
	border-color:#fff #222 #222 #fff;
	line-height:13px;
}
#tab td:nth-child(2){
	text-align:center;
}
#tab td:nth-child(3){
	letter-spacing:.2px;
}
#tab td:nth-child(6){
	text-align:right;
}
#tab .sel td{
	background:#000;
	color:#fff;
	border-bottom-color:#000;
}
#tab .sel td:first-child{
	background:#404040;
}
.pages{
	width:679px;
	margin:-1px 3px -1px 0;
	display:flex;
	background:#d1cdc3;
	border-top:1px solid #111;
	border-right:1px solid #111;
}
.pg{
	width:17px;
	border:1px solid #fff;
	border-right-color:#444;
	border-bottom-color:#444;
	background:#ece9d8;
	text-align:center;
	color:#555;
	line-height:13px;
}
.tabs{
	display:flex;
	background:#e6e1d2;
	font:12px/16px "Liberation Sans",sans-serif;
	letter-spacing:-.05px;
}
.tabs b{
	background:#fff;
	font-size:12px;
	padding:0 1px;
	letter-spacing:-.1px;
}
.tabs span{
	padding:0 2px;
}
.edge{
	width:8px;
	height:16px;
}
.edge.w{
	width:14px;
}

/* property grid */
.pbody{
	flex:1;
	background:#ece9d8;
	display:flex;
	padding:15px 5px 14px 15px;
	gap:4px;
	margin-left:-1px;
}
#props{
	width:236px;
	flex:none;
	height:303px;
	overflow:hidden;
	font-size:11px;
}
.phead{
	height:21px;
	padding:1px 6px 2px;
	background:#aca899;
	color:#fff;
	font:bold 12px/16px "DejaVu Sans Condensed",sans-serif;
	letter-spacing:-.3px;
	display:flex;
	align-items:center;
	justify-content:space-between;
}
.phead i{
	border:4px solid transparent;
	border-top:6px solid #fff;
	border-bottom:0;
	margin-right:1px;
}
.prow{
	height:20px;
	margin-left:15px;
	display:flex;
	border:1px solid #aca899;
	border-top:0;
	line-height:19px;
	position:relative;
}
.prow label{
	width:84px;
	flex:none;
	padding-left:4px;
	border-right:1px solid #aca899;
	letter-spacing:-.05px;
}
.prow span{
	flex:1;
	padding-left:4px;
	background:#fff;
	white-space:nowrap;
	letter-spacing:-.2px;
}
.prow .dis{
	background:none;
	color:#aca899;
}
.grp b{
	padding-left:4px;
	letter-spacing:.35px;
}
.grp:before{
	content:"−";
	position:absolute;
	left:-16px;
	top:4px;
	width:12px;
	height:12px;
	background:#fff;
	font-weight:bold;
	line-height:11px;
	text-align:center;
}
.t:before{
	content:"";
	position:absolute;
	left:-10px;
	top:0;
	width:8px;
	height:10px;
	border:1px dashed #b0ac9c;
	border-width:0 0 1px 1px;
}
.t:after{
	content:"";
	position:absolute;
	left:-10px;
	top:10px;
	height:50%;
	border-left:1px dashed #b0ac9c;
}
.tall{
	height:76px;
	line-height:76px;
}
.tall:before{
	height:38px;
}
.tall:after{
	top:38px;
}
.tall .dis{
	padding:1px 0 0 10px;
	line-height:0;
}
.last{
	height:6px;
}
.dim{
	font:10px "Liberation Sans",sans-serif;
	text-anchor:middle;
	fill:#10107a;
}
#pscroll{
	width:6px;
	height:304px;
	background:#aca899;
}
#pscroll i{
	display:block;
	height:189px;
	border:1px solid #aca899;
	background:#ece9d8;
}

/* window tabs + status */
#wtabs{
	height:21px;
	display:flex;
	gap:2px;
	border-top:2px solid #fff;
	padding:2px 0 0 2px;
	letter-spacing:-.15px;
	background:linear-gradient(#e3e0d0,#ece9d8 50%,#dad7c4);
}
#wtabs span{
	height:16px;
	line-height:15px;
	padding-left:2px;
	border:1px solid;
	border-color:#fff #aca899 #aca899 #fff;
	white-space:nowrap;
}
#wtabs .on{
	background:#fff;
	width:126px;
}
#wtabs .p2{width:170px}
#wtabs .p3{width:171px}
#status{
	height:18px;
	display:flex;
	align-items:center;
	padding-top:1px;
	border-top:1px solid #a5a294;
	background:linear-gradient(#dedbc9,#ece9d8 40%,#ece9d8);
	letter-spacing:-.05px;
	white-space:nowrap;
}
#status span{
	display:flex;
	align-items:center;
}
#status svg{
	width:13px;
	height:13px;
	margin-right:6px;
}
#status .s1{width:145px;padding-left:4px}
#status .s2{width:111px}
#status .s3{width:118px}
#status .s4{letter-spacing:-.2px}
#status .xyz{
	margin-left:auto;
	margin-right:94px;
	letter-spacing:-.12px;
}

/* taskbar */
#task{
	height:30px;
	flex:none;
	display:flex;
	background:linear-gradient(#1f50c0 0,#3c8cf0 8%,#245edb 25%,#2560e0 80%,#1941a5 100%);
	color:#fff;
}
#start{
	width:96px;
	margin-right:9px;
	padding-left:12px;
	display:flex;
	align-items:center;
	border-radius:0 10px 12px 0;
	background:linear-gradient(#2a6a2a 0,#5eb55e 12%,#3c973c 35%,#3a9a3a 75%,#226022 100%);
	box-shadow:inset -3px 0 4px #1c5c1c;
}
#start svg{
	width:20px;
	height:20px;
}
#start b{
	font:italic bold 18px/24px "Noto Sans",sans-serif;
	letter-spacing:-.5px;
	margin-left:3px;
	text-shadow:1px 1px 2px #144014;
}
.tk{
	width:159px;
	height:25px;
	margin:3px 1px 0 0;
	padding-left:9px;
	display:flex;
	align-items:center;
	border-radius:3px;
	white-space:nowrap;
	letter-spacing:-.2px;
	background:linear-gradient(#6aa6ff 0,#3c81f3 15%,#3a7bee 80%,#2c62cc 100%);
}
.tk svg{
	width:17px;
	height:17px;
	margin-right:3px;
}
.tk.cur{
	background:linear-gradient(#123680,#1c4cb8 25%,#1e52c0);
}
.tk.sk{
	background:linear-gradient(#f8a040,#e87a08 20%,#e57806 80%,#b85a00);
}
.sks{
	font:bold 13px "Liberation Sans",sans-serif;
	fill:#fff;
}
#lang{
	margin-left:auto;
	width:73px;
	display:flex;
	align-items:center;
	gap:10px;
}
#tray{
	width:129px;
	display:flex;
	align-items:center;
	gap:2px;
	background:linear-gradient(#0c62c8 0,#30b4f8 8%,#0f92ec 25%,#1199ee 80%,#0b68c0 100%);
}
#tray svg{
	width:16px;
	height:16px;
}
#tray .chev{
	width:18px;
	height:18px;
	margin-left:-9px;
}
.en{
	width:15px;
	height:16px;
	background:#7c0808;
	line-height:16px;
	letter-spacing:-.5px;
}
.clock{
	margin-left:7px;
	letter-spacing:-.2px;
}
.hq{
	font:bold 12px "Liberation Sans",sans-serif;
}
.one{
	font:bold 8px "Liberation Sans",sans-serif;
}
```
